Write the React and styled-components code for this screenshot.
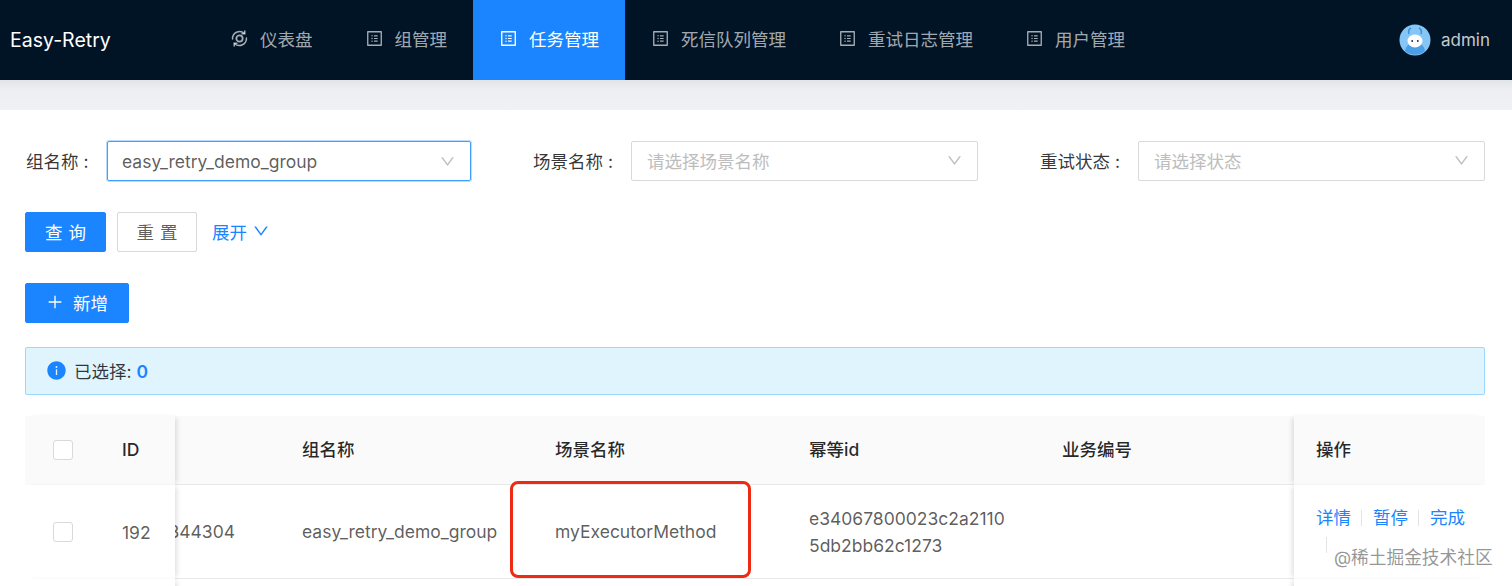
import React from 'react';
import styled, { createGlobalStyle } from 'styled-components';
import { AiOutlineProfile, AiOutlineDown, AiOutlinePlus, AiFillInfoCircle } from 'react-icons/ai';

const FONT = `Inter, "Noto Sans CJK SC", sans-serif`;
const BLUE = '#1a85ff';

const GlobalStyle = createGlobalStyle`
  html, body {
    margin: 0;
    padding: 0;
    background: #fff;
    overflow: hidden;
  }
  body {
    font-family: ${FONT};
    font-size: 17.5px;
    color: rgba(0, 0, 0, 0.65);
  }
  * {
    box-sizing: border-box;
  }
`;

const Page = styled.div`
  position: relative;
  width: 1512px;
  height: 586px;
  overflow: hidden;
`;

const Header = styled.header`
  display: flex;
  align-items: stretch;
  height: 80px;
  background: #011426;
`;

const Logo = styled.div`
  width: 204px;
  padding-left: 10px;
  display: flex;
  align-items: center;
  color: #fff;
  font-size: 19.5px;
`;

const Nav = styled.nav`
  display: flex;
  flex: 1;
`;

const NavItem = styled.div`
  display: flex;
  align-items: center;
  gap: 11px;
  padding: 0 26px 3px;
  color: ${(p) => (p.$active ? '#fff' : 'rgba(255, 255, 255, 0.65)')};
  background: ${(p) => (p.$active ? BLUE : 'transparent')};
  font-size: 17.5px;

  svg {
    width: 19px;
    height: 19px;
    flex: none;
  }
`;

const User = styled.div`
  display: flex;
  align-items: center;
  gap: 10px;
  padding-right: 22px;
  color: rgba(255, 255, 255, 0.78);
  font-size: 17px;
`;

const Band = styled.div`
  height: 30px;
  background: linear-gradient(#e2e5e8, #eceef1 9px, #eff1f4);
`;

const Content = styled.main`
  padding: 31px 27px 0 25px;
`;

const FilterRow = styled.div`
  display: grid;
  grid-template-columns: 446px 507px 1fr;
  height: 40px;
`;

const Field = styled.div`
  display: flex;
  align-items: center;
  padding-left: ${(p) => p.$offset || 0}px;
`;

const FieldLabel = styled.label`
  width: ${(p) => p.$width}px;
  flex: none;
  padding: 0 0 2px 1px;
  color: rgba(0, 0, 0, 0.8);
  white-space: nowrap;
`;

const Select = styled.div`
  display: flex;
  align-items: center;
  justify-content: space-between;
  width: ${(p) => p.$width}px;
  height: 40px;
  padding: 0 14px ${(p) => (p.$placeholder ? 2 : 0)}px ${(p) => (p.$focused ? 14 : 15)}px;
  border: 1px solid ${(p) => (p.$focused ? '#40a0ff' : '#d9d9d9')};
  border-radius: 2px;
  box-shadow: ${(p) => (p.$focused ? '0 0 0 1px rgba(24, 144, 255, 0.3)' : 'none')};
  color: ${(p) => (p.$placeholder ? '#bdbdbd' : 'rgba(0, 0, 0, 0.65)')};

  svg {
    width: 17px;
    height: 17px;
    color: #bfbfbf;
  }
`;

const ActionRow = styled.div`
  display: flex;
  align-items: center;
  gap: 11px;
  margin-top: 31px;
`;

const Button = styled.button`
  display: inline-flex;
  align-items: center;
  justify-content: center;
  gap: 9px;
  width: ${(p) => p.$width}px;
  height: 40px;
  padding: 0 0 2px;
  border: 1px solid ${(p) => (p.$primary ? BLUE : '#d9d9d9')};
  border-radius: 2px;
  background: ${(p) => (p.$primary ? BLUE : '#fff')};
  color: ${(p) => (p.$primary ? '#fff' : 'rgba(0, 0, 0, 0.65)')};
  font-family: ${FONT};
  font-size: 17.5px;
  letter-spacing: ${(p) => (p.$spaced ? '6px' : '0')};
  text-indent: ${(p) => (p.$spaced ? '6px' : '0')};

  svg {
    width: 18px;
    height: 18px;
  }
`;

const ToggleLink = styled.a`
  display: inline-flex;
  align-items: center;
  gap: 5px;
  margin-left: 4px;
  padding-bottom: 2px;
  color: ${BLUE};

  svg {
    width: 18px;
    height: 18px;
  }
`;

const AddRow = styled.div`
  margin-top: 31px;
`;

const Alert = styled.div`
  display: flex;
  align-items: center;
  gap: 7px;
  height: 48px;
  margin-top: 24px;
  padding: 0 0 2px 20px;
  border: 1px solid #9bd8fd;
  border-radius: 2px;
  background: #e0f4fe;
  color: rgba(0, 0, 0, 0.78);

  svg {
    width: 21px;
    height: 21px;
    color: ${BLUE};
  }
`;

const AlertCount = styled.b`
  color: ${BLUE};
  font-weight: 600;
`;

const Table = styled.div`
  margin-top: 21px;
`;

const Row = styled.div`
  display: grid;
  grid-template-columns: 150px 127px 253px 254px 253px 232px 191px;
  height: ${(p) => p.$height}px;
  border-bottom: 1px solid ${(p) => (p.$open ? 'transparent' : '#e8e8e8')};
  background: ${(p) => (p.$head ? '#fafafa' : '#fff')};
  color: ${(p) => (p.$head ? 'rgba(0, 0, 0, 0.85)' : 'rgba(0, 0, 0, 0.65)')};
  font-weight: ${(p) => (p.$head ? 500 : 400)};

  > div {
    padding-bottom: ${(p) => (p.$head ? 2 : 0)}px;
  }
`;

const Cell = styled.div`
  display: flex;
  align-items: center;
  min-width: 0;
  line-height: 27px;
`;

const FixedLeft = styled(Cell)`
  position: relative;
  z-index: 1;
  padding-left: 28px;
  gap: 49px;
  background: inherit;
  box-shadow: 4px 0 5px -2px rgba(0, 0, 0, 0.12);
  height: calc(100% + 1px);
`;

const FixedRight = styled(Cell)`
  position: relative;
  z-index: 1;
  padding-left: 22px;
  background: inherit;
  box-shadow: -4px 0 5px -2px rgba(0, 0, 0, 0.12);
  height: calc(100% + 1px);
`;

const ClippedCell = styled(Cell)`
  justify-content: flex-end;
  overflow: hidden;
  padding-right: 67px;
  white-space: nowrap;
`;

const WrapText = styled.div`
  width: 200px;
  word-break: break-all;
`;

const Checkbox = styled.span`
  flex: none;
  width: 20px;
  height: 20px;
  border: 1px solid #d9d9d9;
  border-radius: 3px;
  background: #fff;
`;

const OpsList = styled.div`
  display: flex;
  flex-wrap: wrap;
  align-items: center;
  row-gap: 6px;
  margin-bottom: 7px;
  color: ${BLUE};
`;

const OpsDivider = styled.i`
  width: 1px;
  height: 16px;
  margin: 0 11px 0 10px;
  background: #e4e4e4;
`;

const Highlight = styled.div`
  position: absolute;
  left: 510px;
  top: 481px;
  width: 241px;
  height: 97px;
  border: 3px solid #ee2a12;
  border-radius: 8px;
  pointer-events: none;
  z-index: 2;
`;

const Watermark = styled.div`
  position: absolute;
  left: 1334px;
  top: 543px;
  color: rgba(110, 110, 110, 0.72);
  font-size: 17.7px;
  z-index: 3;
  text-shadow: 0 0 2px rgba(255, 255, 255, 0.9);
`;

const DashIcon = () => (
  <svg viewBox="0 0 18 18" fill="none" stroke="currentColor" strokeWidth="1.4" strokeLinecap="round">
    <path d="M2.4 9.5A6.8 6.8 0 0 1 13.6 4" />
    <path d="M14 1.8v2.6h-2.6" />
    <path d="M15.6 8.5A6.8 6.8 0 0 1 4.4 14" />
    <path d="M4 16.2v-2.6h2.6" />
    <circle cx="9" cy="9" r="3" strokeWidth="1.7" />
  </svg>
);

const Avatar = () => (
  <svg width="32" height="32" viewBox="0 0 32 32">
    <circle cx="16" cy="16" r="15.5" fill="#86c6f6" />
    <path d="M6 27c1-6 5-8 10-8s9 2 10 8a15 15 0 0 1-20 0z" fill="#4a9fe6" />
    <path d="M10 10c-1-3 0-5 2-6M22 10c1-3 0-5-2-6" stroke="#3f8fd8" strokeWidth="1.5" fill="none" />
    <ellipse cx="16" cy="17" rx="7.5" ry="6.5" fill="#fff" />
    <circle cx="13.2" cy="17" r="0.9" fill="#223" />
    <circle cx="18.8" cy="17" r="0.9" fill="#223" />
  </svg>
);

const navItems = [
  { name: '仪表盘', icon: <DashIcon /> },
  { name: '组管理', icon: <AiOutlineProfile /> },
  { name: '任务管理', icon: <AiOutlineProfile />, active: true },
  { name: '死信队列管理', icon: <AiOutlineProfile /> },
  { name: '重试日志管理', icon: <AiOutlineProfile /> },
  { name: '用户管理', icon: <AiOutlineProfile /> },
];

const App = () => {
  return (
    <Page>
      <GlobalStyle />
      <Header>
        <Logo>Easy-Retry</Logo>
        <Nav>
          {navItems.map((item) => (
            <NavItem key={item.name} $active={item.active}>
              {item.icon}
              <span>{item.name}</span>
            </NavItem>
          ))}
        </Nav>
        <User>
          <Avatar />
          <span>admin</span>
        </User>
      </Header>
      <Band />
      <Content>
        <FilterRow>
          <Field>
            <FieldLabel $width={82}>组名称 :</FieldLabel>
            <Select $width={364} $focused>
              easy_retry_demo_group
              <AiOutlineDown />
            </Select>
          </Field>
          <Field $offset={61}>
            <FieldLabel $width={99}>场景名称 :</FieldLabel>
            <Select $width={347} $placeholder>
              请选择场景名称
              <AiOutlineDown />
            </Select>
          </Field>
          <Field $offset={61}>
            <FieldLabel $width={99}>重试状态 :</FieldLabel>
            <Select $width={347} $placeholder>
              请选择状态
              <AiOutlineDown />
            </Select>
          </Field>
        </FilterRow>
        <ActionRow>
          <Button $primary $spaced $width={81}>查询</Button>
          <Button $spaced $width={80}>重置</Button>
          <ToggleLink>
            展开
            <AiOutlineDown />
          </ToggleLink>
        </ActionRow>
        <AddRow>
          <Button $primary $width={104}>
            <AiOutlinePlus />
            新增
          </Button>
        </AddRow>
        <Alert>
          <AiFillInfoCircle />
          <span>
            已选择: <AlertCount>0</AlertCount>
          </span>
        </Alert>
        <Table>
          <Row $head $height={69}>
            <FixedLeft>
              <Checkbox />
              ID
            </FixedLeft>
            <Cell />
            <Cell>组名称</Cell>
            <Cell>场景名称</Cell>
            <Cell>幂等id</Cell>
            <Cell>业务编号</Cell>
            <FixedRight>操作</FixedRight>
          </Row>
          <Row $height={94}>
            <FixedLeft>
              <Checkbox />
              192
            </FixedLeft>
            <ClippedCell>1928344304</ClippedCell>
            <Cell>easy_retry_demo_group</Cell>
            <Cell>myExecutorMethod</Cell>
            <Cell>
              <WrapText>e34067800023c2a21105db2bb62c1273</WrapText>
            </Cell>
            <Cell />
            <FixedRight>
              <OpsList>
                详情
                <OpsDivider />
                暂停
                <OpsDivider />
                完成
                <OpsDivider />
              </OpsList>
            </FixedRight>
          </Row>
          <Row $open $height={40}>
            <FixedLeft />
            <Cell />
            <Cell />
            <Cell />
            <Cell />
            <Cell />
            <FixedRight />
          </Row>
        </Table>
      </Content>
      <Highlight />
      <Watermark>@稀土掘金技术社区</Watermark>
    </Page>
  );
};

export default App;
